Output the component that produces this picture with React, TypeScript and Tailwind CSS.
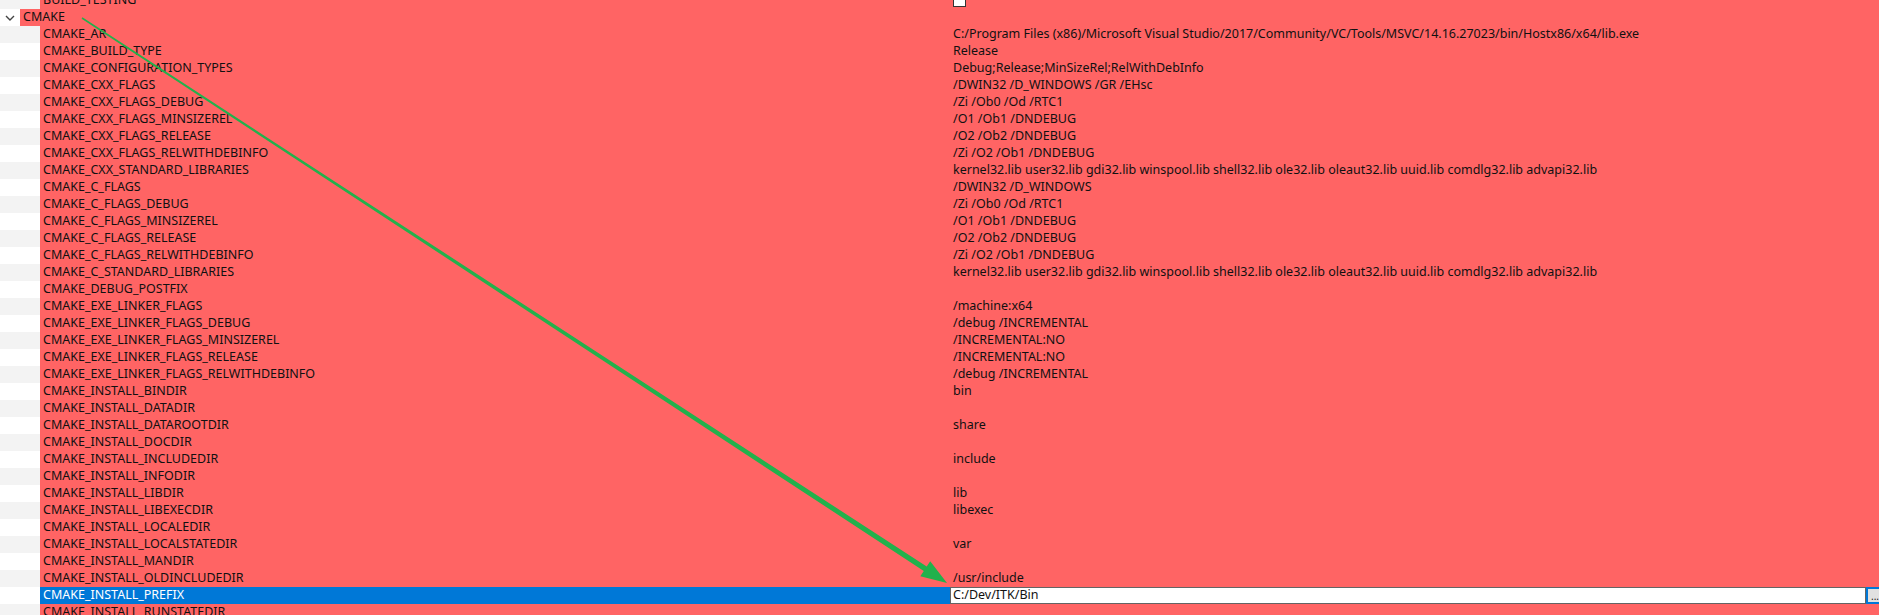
import React from 'react';

type Entry = { name: string; value?: string; kind?: 'check' | 'edit' };

const LIBS =
  'kernel32.lib user32.lib gdi32.lib winspool.lib shell32.lib ole32.lib oleaut32.lib uuid.lib comdlg32.lib advapi32.lib';

const entries: Entry[] = [
  { name: 'CMAKE_AR', value: 'C:/Program Files (x86)/Microsoft Visual Studio/2017/Community/VC/Tools/MSVC/14.16.27023/bin/Hostx86/x64/lib.exe' },
  { name: 'CMAKE_BUILD_TYPE', value: 'Release' },
  { name: 'CMAKE_CONFIGURATION_TYPES', value: 'Debug;Release;MinSizeRel;RelWithDebInfo' },
  { name: 'CMAKE_CXX_FLAGS', value: '/DWIN32 /D_WINDOWS /GR /EHsc' },
  { name: 'CMAKE_CXX_FLAGS_DEBUG', value: '/Zi /Ob0 /Od /RTC1' },
  { name: 'CMAKE_CXX_FLAGS_MINSIZEREL', value: '/O1 /Ob1 /DNDEBUG' },
  { name: 'CMAKE_CXX_FLAGS_RELEASE', value: '/O2 /Ob2 /DNDEBUG' },
  { name: 'CMAKE_CXX_FLAGS_RELWITHDEBINFO', value: '/Zi /O2 /Ob1 /DNDEBUG' },
  { name: 'CMAKE_CXX_STANDARD_LIBRARIES', value: LIBS },
  { name: 'CMAKE_C_FLAGS', value: '/DWIN32 /D_WINDOWS' },
  { name: 'CMAKE_C_FLAGS_DEBUG', value: '/Zi /Ob0 /Od /RTC1' },
  { name: 'CMAKE_C_FLAGS_MINSIZEREL', value: '/O1 /Ob1 /DNDEBUG' },
  { name: 'CMAKE_C_FLAGS_RELEASE', value: '/O2 /Ob2 /DNDEBUG' },
  { name: 'CMAKE_C_FLAGS_RELWITHDEBINFO', value: '/Zi /O2 /Ob1 /DNDEBUG' },
  { name: 'CMAKE_C_STANDARD_LIBRARIES', value: LIBS },
  { name: 'CMAKE_DEBUG_POSTFIX' },
  { name: 'CMAKE_EXE_LINKER_FLAGS', value: '/machine:x64' },
  { name: 'CMAKE_EXE_LINKER_FLAGS_DEBUG', value: '/debug /INCREMENTAL' },
  { name: 'CMAKE_EXE_LINKER_FLAGS_MINSIZEREL', value: '/INCREMENTAL:NO' },
  { name: 'CMAKE_EXE_LINKER_FLAGS_RELEASE', value: '/INCREMENTAL:NO' },
  { name: 'CMAKE_EXE_LINKER_FLAGS_RELWITHDEBINFO', value: '/debug /INCREMENTAL' },
  { name: 'CMAKE_INSTALL_BINDIR', value: 'bin' },
  { name: 'CMAKE_INSTALL_DATADIR' },
  { name: 'CMAKE_INSTALL_DATAROOTDIR', value: 'share' },
  { name: 'CMAKE_INSTALL_DOCDIR' },
  { name: 'CMAKE_INSTALL_INCLUDEDIR', value: 'include' },
  { name: 'CMAKE_INSTALL_INFODIR' },
  { name: 'CMAKE_INSTALL_LIBDIR', value: 'lib' },
  { name: 'CMAKE_INSTALL_LIBEXECDIR', value: 'libexec' },
  { name: 'CMAKE_INSTALL_LOCALEDIR' },
  { name: 'CMAKE_INSTALL_LOCALSTATEDIR', value: 'var' },
  { name: 'CMAKE_INSTALL_MANDIR' },
  { name: 'CMAKE_INSTALL_OLDINCLUDEDIR', value: '/usr/include' },
  { name: 'CMAKE_INSTALL_PREFIX', value: 'C:/Dev/ITK/Bin', kind: 'edit' },
  { name: 'CMAKE_INSTALL_RUNSTATEDIR' },
];

// flecha verde tipo captura (se va engrosando)
const Arrow: React.FC = () => {
  const x1 = 82, y1 = 18, x2 = 947, y2 = 583;
  const dx = x2 - x1, dy = y2 - y1;
  const len = Math.hypot(dx, dy);
  const ux = dx / len, uy = dy / len;
  const px = -uy, py = ux;
  const headLen = 26, headW = 9;
  const bx = x2 - ux * headLen, by = y2 - uy * headLen;
  const w0 = 0.8, w1 = 2.6;
  const pts = [
    [x1 + px * w0, y1 + py * w0],
    [bx + px * w1, by + py * w1],
    [bx + px * headW, by + py * headW],
    [x2, y2],
    [bx - px * headW, by - py * headW],
    [bx - px * w1, by - py * w1],
    [x1 - px * w0, y1 - py * w0],
  ]
    .map((p) => `${p[0].toFixed(1)},${p[1].toFixed(1)}`)
    .join(' ');
  return (
    <svg className="absolute left-0 top-0 pointer-events-none" width={1879} height={615}>
      <polygon points={pts} fill="#22b14c" />
    </svg>
  );
};

const App: React.FC = () => {
  return (
    <div
      className="relative w-[1879px] h-[615px] overflow-hidden bg-white text-[12.5px] text-[#111] leading-none"
      style={{ fontFamily: '"Noto Sans", "Noto Sans CJK SC", sans-serif' }}
    >
      <div className="-mt-[8px] flex flex-col">
        {/* BUILD_TESTING */}
        <div className="flex h-[17px]">
          <div className="w-[40px] bg-[#f3f3f3]" />
          <div className="flex-1 flex items-center bg-[#ff6464]">
            <div className="w-[910px] pl-[3px]">BUILD_TESTING</div>
            <div className="pl-[3px]">
              <div className="w-[13px] h-[13px] bg-white border border-[#333]" />
            </div>
          </div>
        </div>

        {/* grupo CMAKE */}
        <div className="flex h-[17px]">
          <div className="w-[20px] bg-white flex items-center justify-center">
            <svg width="10" height="6" viewBox="0 0 10 6">
              <polyline points="1,1 5,5 9,1" fill="none" stroke="#444" strokeWidth="1.4" />
            </svg>
          </div>
          <div className="flex-1 flex items-center bg-[#ff6464]">
            <div className="bg-[#ff6464] pl-[3px]">CMAKE</div>
          </div>
        </div>

        {entries.map((e, i) => {
          const sel = e.kind === 'edit';
          return (
            <div key={e.name} className="flex h-[17px]">
              <div className={i % 2 === 0 ? 'w-[40px] shrink-0 bg-[#f3f3f3]' : 'w-[40px] shrink-0 bg-white'} />
              <div className="flex-1 min-w-0 flex items-center bg-[#ff6464]">
                <div
                  className={
                    sel
                      ? 'w-[910px] shrink-0 h-full flex items-center pl-[3px] bg-[#0078d7] text-white'
                      : 'w-[910px] shrink-0 pl-[3px] whitespace-nowrap'
                  }
                >
                  {e.name}
                </div>
                {sel ? (
                  <div className="flex h-full">
                    <div className="w-[916px] shrink-0 h-full flex items-center bg-white border border-[#646464] pl-[2px] text-[#111]">
                      {e.value}
                    </div>
                    <div className="w-[22px] shrink-0 h-full bg-[#e1e1e1] border-2 border-[#0078d7] flex items-end pl-[3px] pb-[1px] text-[10px] text-[#222]">
                      ...
                    </div>
                  </div>
                ) : (
                  <div className="pl-[3px] whitespace-nowrap">{e.value}</div>
                )}
              </div>
            </div>
          );
        })}
      </div>
      <Arrow />
    </div>
  );
};

export default App;
